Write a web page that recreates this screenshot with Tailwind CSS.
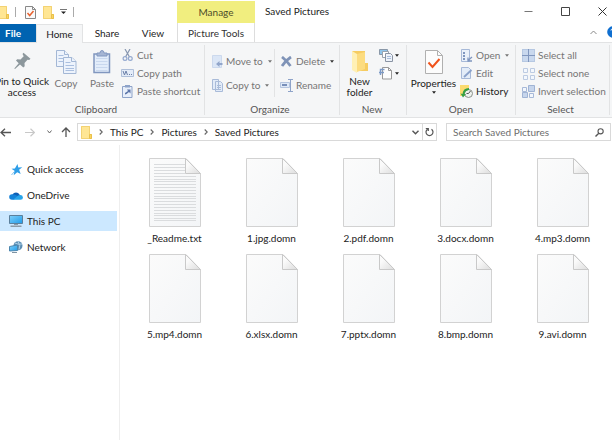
<!DOCTYPE html>
<html lang="en">
<head>
  <meta charset="UTF-8" />
  <title>Saved Pictures</title>
  <script src="https://cdn.jsdelivr.net/npm/@tailwindcss/browser@4"></script>
</head>
<body class="bg-white text-[#222] text-[10px] leading-3 font-[Lato,sans-serif] min-h-screen flex flex-col overflow-hidden">

  <!-- shared icons -->
  <svg class="absolute size-0">
    <linearGradient id="paper" x1="0" y1="0" x2="1" y2="1"><stop offset="0" stop-color="#fbfbfb" /><stop offset="1" stop-color="#f3f5f7" /></linearGradient>
    <linearGradient id="fold" x1="0" y1="0" x2="1" y2="1"><stop offset="0.3" stop-color="#fafafa" /><stop offset="1" stop-color="#dcdcdc" /></linearGradient>
    <linearGradient id="screen" x1="0" y1="0" x2="1" y2="1"><stop offset="0" stop-color="#7fd0fb" /><stop offset="1" stop-color="#1f9be8" /></linearGradient>
    <symbol id="folder" viewBox="0 0 11 13">
      <path d="M0 0h9v8h2v5H0z" fill="#fbdf83" /><path d="M.5.5h8v12H.5z" fill="#ffe694" stroke="#f3d273" /><path d="M8.500 8.500h2v4h-2z" fill="#fbd560" stroke="#e9c04c" />
    </symbol>
    <symbol id="caret" viewBox="0 0 5 3"><path d="M0 0h5L2.500 3z" fill="currentColor" /></symbol>
    <symbol id="chevron" viewBox="0 0 4 6"><path d="M.7.500 3.200 3 .7 5.500" fill="none" stroke="#666" stroke-width="1.100" /></symbol>
    <symbol id="file" viewBox="0 0 52 69">
      <path d="M.5.5H37L51.500 15.500V68.500H.5z" fill="url(#paper)" stroke="#d2d2d2" />
      <path d="M36.500.5 51.500 15.500h-15z" fill="url(#fold)" stroke="#c9c9c9" />
    </symbol>
    <symbol id="lines" viewBox="0 0 52 69">
      <path d="M5 6.500h31M5 9.500h31M5 12.500h31M5 15.500h31M5 18.500h42M5 21.500h42M5 23.500h42M5 26.500h42M5 29.500h42M5 32.500h42M5 35.500h42M5 38.500h42M5 40.500h42M5 43.500h42M5 46.500h42M5 49.500h42M5 52.500h42M5 55.500h42M5 57.500h42M5 60.500h42M5 62.500h42" stroke="#dadcde" fill="none" />
    </symbol>
  </svg>

  <header class="grid grid-cols-[177px_78px_1fr] h-[42px]">
    <div class="flex flex-col">
      <div class="flex items-center h-6 shrink-0">
        <svg class="w-[9px] h-[13px]" viewBox="2 0 9 13"><use href="#folder" width="11" height="13" /></svg>
        <span class="w-px h-2.5 bg-[#aaa] ml-1.5"></span>
        <button aria-label="Properties" class="ml-[9px]">
          <svg class="w-[11px] h-[13px]" viewBox="0 0 11 13"><path d="M.5.5h7l3 3v9H.5z" fill="#fafafa" stroke="#888" /><path d="M7.500.5v3h3" fill="none" stroke="#888" /><path d="m2.500 7 2.200 2.500L8.500 5" fill="none" stroke="#e8622f" stroke-width="1.500" /></svg>
        </button>
        <button aria-label="New folder" class="ml-[7px]"><svg class="w-[11px] h-[13px]"><use href="#folder" /></svg></button>
        <button aria-label="Customize toolbar" class="ml-1.5"><svg class="w-[7px] h-[6px]" viewBox="0 0 7 6"><path d="M0 .5h7" stroke="#777" /><path d="M1 2.500h5L3.500 5z" fill="#222" /></svg></button>
        <span class="w-px h-2.5 bg-[#aaa] ml-1.5"></span>
      </div>
      <nav class="flex h-[18px]">
        <button class="w-9 bg-[#0063b1] text-white font-bold pr-2.5">File</button>
        <button class="w-[47px] h-[19px] relative bg-[#f5f6f7] border-x border-t border-[#e2e3e4]">Home</button>
        <button class="w-12">Share</button>
        <button class="w-11">View</button>
      </nav>
    </div>
    <div class="flex flex-col pt-px">
      <button class="h-[22px] bg-[#f1ee7f] text-[#4d4d2a]">Manage</button>
      <button class="h-[19px] border-x border-[#ddd] text-[#333]">Picture Tools</button>
    </div>
    <div class="flex flex-col">
      <div class="flex h-[22px] shrink-0 items-center gap-7 pr-[5px]">
        <h1 class="pl-2.5 flex-1">Saved Pictures</h1>
        <button aria-label="Minimize"><svg class="size-[9px]" viewBox="0 0 9 9"><path d="M.5 4.500h8" stroke="#777" /></svg></button>
        <button aria-label="Maximize"><svg class="size-[9px]" viewBox="0 0 9 9"><path d="M.5.5h8v8h-8z" fill="none" stroke="#444" /></svg></button>
        <button aria-label="Close"><svg class="size-[9px]" viewBox="0 0 9 9"><path d="m.5.5 8 8m0-8-8 8" stroke="#333" /></svg></button>
      </div>
      <div class="flex justify-end items-center h-5">
        <button aria-label="Collapse ribbon"><svg class="w-[7px] h-[5px]" viewBox="0 0 7 5"><path d="M.5 4 3.500 1l3 3" fill="none" stroke="#888" /></svg></button>
        <button aria-label="Help" class="ml-2.5"><svg class="w-[5px] h-3" viewBox="0 0 5 12"><circle cx="6" cy="6" r="5.800" fill="#0f6fd0" /><path d="M4 4.500q0-1.500 1.500-1.500" stroke="#fff" fill="none" /></svg></button>
      </div>
    </div>
  </header>

  <section class="flex h-[76px] bg-[#f5f6f7] border-y border-[#e2e3e4] text-[#757575] whitespace-nowrap overflow-hidden">
    <!-- Clipboard -->
    <div class="w-[205px] shrink-0 flex flex-col border-r border-[#e2e3e4] my-0.5">
      <div class="flex flex-1">
        <button class="w-11 flex flex-col items-center pt-[7px] text-[#222]">
          <svg class="w-[17px] h-[18px] ml-px shrink-0" viewBox="0 0 17 18"><path d="m9.500.8 7 6-1.300 1.300-1.700-.3-3 3.200.2 3.200-1.400 1.200-3.300-3L1 17l-.7-.6L4.700 11.200 2 8.500l1.200-1.200 3.300.2 3.200-3.300L8.500 2z" fill="#8c979c" /></svg>
          <span class="mt-1.5 leading-[11px] text-center">Pin to Quick<br />access</span>
        </button>
        <button class="w-11 flex flex-col items-center pt-[5px]">
          <svg class="w-[21px] h-6 shrink-0" viewBox="0 0 21 24">
            <g fill="#edf3fc" stroke="#a3b7d5"><path d="M.5.5h8l4 4v12H.5z" /><path d="M8.500.5v4h4" /><path d="M7.500 7.500h8.500l4 4v12H7.500z" /><path d="M15.500 7.500v4h4.500" /></g>
            <path d="M2.500 5.500h5M2.500 8.500h5M2.500 11.500h5M9.500 12.500h5M9.500 15.500h8.500M9.500 18.500h8.500M9.500 20.500h8.500" stroke="#aabfdf" />
          </svg>
          <span class="mt-[3px]">Copy</span>
        </button>
        <button class="w-6 ml-0.5 flex flex-col items-center pt-[5px]">
          <svg class="w-[18px] h-6 shrink-0" viewBox="0 0 18 24"><path d="M1 4h15.500v18.500H1z" fill="#e3edfa" stroke="#8197bf" stroke-width="1.500" /><path d="M4 3h3q0-2.500 2-2.500T11 3h3v3H4z" fill="#a5b5d3" stroke="#8197bf" /><path d="M3 8.500h11.500M3 11.500h11.500M3 14.500h11.500M3 17.500h11.500M3 20.500h11.500" stroke="#c9d8ee" /></svg>
          <span class="mt-[3px]">Paste</span>
        </button>
        <div class="flex flex-col pt-px ml-[7px]">
          <button class="flex items-center h-[18px] gap-[3px]"><svg class="w-[13px] h-3" viewBox="0 0 13 12"><path d="M4 0 8.500 8M9 0 4.500 8" stroke="#8796b0" stroke-width="1.200" /><circle cx="4" cy="9.500" r="1.900" fill="none" stroke="#94a9cf" stroke-width="1.200" /><circle cx="9.300" cy="9.500" r="1.900" fill="none" stroke="#94a9cf" stroke-width="1.200" /></svg>Cut</button>
          <button class="flex items-center h-[18px] gap-[3px]"><svg class="w-[13px] h-2" viewBox="0 0 13 8"><path d="M.5.5h12v7H.5z" fill="#e4ecf8" stroke="#afbfd9" /><path d="m2 2 1.500 4L5 2l1.500 4M8 5.500h1m1 0h1" fill="none" stroke="#6b80a8" /></svg>Copy path</button>
          <button class="flex items-center h-[18px] gap-[3px]"><svg class="w-[13px] h-[13px]" viewBox="0 0 13 13"><path d="M1.500 1.500h9.500v11H1.500z" fill="#e8effa" stroke="#8ea3c9" /><path d="M4 0h5v2.500H4z" fill="#8ea3c9" /><path d="M4 9.500V8l3-2-1-1.500h3.500v4L8 7 5.500 9z" fill="#5c75a8" /></svg>Paste shortcut</button>
        </div>
      </div>
      <div class="text-center pr-3 h-3 text-[#555]">Clipboard</div>
    </div>

    <!-- Organize -->
    <div class="w-[135px] shrink-0 flex flex-col border-r border-[#e2e3e4] my-0.5">
      <div class="flex flex-1">
        <div class="w-[70px] h-12 mt-1 pl-[7px] border-r border-[#e2e3e4] flex flex-col">
          <button class="flex items-center h-6 gap-[3px]"><svg class="w-[11px] h-[13px]" viewBox="0 0 11 13"><path d="M.5.5h9v12h-9z" fill="#dbe6f6" stroke="#ccd9ed" /><path d="M10.500 8h-3V6L4 9l3.500 3v-2h3z" fill="#91a5ca" /></svg>Move to<svg class="w-1 h-[3px] ml-0.5"><use href="#caret" /></svg></button>
          <button class="flex items-center h-6 gap-[3px]"><svg class="w-[11px] h-[13px]" viewBox="0 0 11 13"><path d="M.5.5h6v10h-6zM3.500 2.500h5l2 2v8h-7z" fill="#e2ebf8" stroke="#a9bbd9" /><path d="M5 6.500h4M5 8.500h4M5 10.500h4" stroke="#a9bbd9" /></svg>Copy to<svg class="w-1 h-[3px] ml-0.5"><use href="#caret" /></svg></button>
        </div>
        <div class="h-12 mt-1 pl-[5px] flex flex-col">
          <button class="flex items-center h-6 gap-[3px]"><svg class="w-[13px] h-[11px]" viewBox="0 0 13 11"><path d="M2 1q4 3 8.500 9M11 1Q6 4 2 10" fill="none" stroke="#7f93b7" stroke-width="2.800" /></svg>Delete<svg class="w-1 h-[3px] text-[#333] ml-0.5"><use href="#caret" /></svg></button>
          <button class="flex items-center h-6 gap-[3px]"><svg class="w-[13px] h-[13px]" viewBox="0 0 13 13"><path d="M.5 3.500h9v5h-9z" fill="#dfe9f7" stroke="#b5c5df" /><path d="M2 6h5" stroke="#7990ba" stroke-width="2" /><path d="M8 .5h5M8 12.500h5M10.500.5v12" stroke="#8ea3c9" /></svg>Rename</button>
        </div>
      </div>
      <div class="text-center pr-1 h-3 text-[#555]">Organize</div>
    </div>

    <!-- New -->
    <div class="w-[67px] shrink-0 flex flex-col border-r border-[#e2e3e4] my-0.5">
      <div class="flex flex-1">
        <button class="w-[39px] flex flex-col items-center pt-[6px] text-[#222]">
          <svg class="w-4 h-[22px] shrink-0" viewBox="0 0 16 22"><path d="M0 0h13v12h3v8H6z" fill="#f6cc62" /><path d="M0 0l5 3v19l-5-3z" fill="#fff0b5" /><path d="M5 3 13 1v17l-8 3z" fill="#fcdc80" /></svg>
          <span class="mt-[3px] leading-[11px] text-center">New<br />folder</span>
        </button>
        <div class="flex flex-col gap-1 pt-[3px]">
          <button aria-label="New item" class="flex items-center gap-0.5 text-[#222]"><svg class="w-[14px] h-[14px]" viewBox="0 0 14 14"><path d="M.5 1.500h8v5h-8z" fill="#8fc4ea" stroke="#8a98a8" /><path d="M3.500 3.500h6v6h-6z" fill="#fff" stroke="#98a2ae" /><path d="M6.500 5.500h5l2 2v6h-7z" fill="#eef3fa" stroke="#8a94a4" /><path d="M8 8.500h4M8 10.500h4" stroke="#a8bddc" /></svg><svg class="w-1 h-[3px]"><use href="#caret" /></svg></button>
          <button aria-label="Easy access" class="flex items-center gap-0.5 text-[#222]"><svg class="w-[14px] h-[14px]" viewBox="0 0 14 14"><path d="M3.500 1.500h6l3 3v8.500h-9z" fill="#fdfdfd" stroke="#999" /><path d="M9.500 1.500v3h3" fill="none" stroke="#999" /><path d="M0 6.500h5M1.500 9V3.500h4" fill="none" stroke="#7c9ac7" stroke-width="1.400" /></svg><svg class="w-1 h-[3px]"><use href="#caret" /></svg></button>
        </div>
      </div>
      <div class="text-center pr-0.5 h-3 text-[#555]">New</div>
    </div>

    <!-- Open -->
    <div class="w-[109px] shrink-0 flex flex-col border-r border-[#e2e3e4] my-0.5">
      <div class="flex flex-1">
        <button class="w-[53px] flex flex-col items-center pt-[5px] text-[#222]">
          <svg class="w-[18px] h-6 shrink-0" viewBox="0 0 18 24"><path d="M.5.5h12l5 5v18H.5z" fill="#fcfcfc" stroke="#b0b0b0" /><path d="M12.500.5v5h5" fill="none" stroke="#b0b0b0" /><path d="m3.500 12.500 4 4.500L14.500 9" fill="none" stroke="#f0531c" stroke-width="2" /></svg>
          <span class="mt-[3px]">Properties</span>
          <svg class="w-1 h-[3px] mt-0.5 shrink-0"><use href="#caret" /></svg>
        </button>
        <div class="flex flex-col pt-px">
          <button class="flex items-center h-[18px] gap-[3px]"><svg class="w-[13px] h-[13px]" viewBox="0 0 13 13"><path d="M1.500.5h8v12h-8z" fill="#e9f0fa" stroke="#a7b9d8" /><path d="M3 3h2v2H3zM3 6h2v2H3zM3 9h2v2H3z" fill="#7f96bf" /><path d="m12 8-4 3.500M8 8.500v3.500h4" fill="none" stroke="#7f96bf" stroke-width="1.300" /></svg>Open<svg class="w-1 h-[3px] ml-0.5"><use href="#caret" /></svg></button>
          <button class="flex items-center h-[18px] gap-[3px]"><svg class="w-[13px] h-3" viewBox="0 0 13 12"><path d="M1.500.5h7l2 2v9h-9z" fill="#e3ecf8" stroke="#a7b9d8" /><path d="m4 10 7.500-7" stroke="#8ba2cb" stroke-width="1.800" /></svg>Edit</button>
          <button class="flex items-center h-[18px] gap-[3px] text-[#222]"><svg class="w-[13px] h-[13px]" viewBox="0 0 13 13"><path d="M0 0h9v11H0z" fill="#fbdb70" /><circle cx="8.500" cy="8.500" r="4" fill="#eef2ee" stroke="#8a918a" /><path d="M8.500 8.500l2-2.500M8.500 8.500h-2" stroke="#555" /><path d="M9 3Q3 3 2.500 9L.5 8.500 3 12.500l3-3.500H4.500Q5 5.500 9 5z" fill="#35a045" /></svg>History</button>
        </div>
      </div>
      <div class="text-center h-3 text-[#555]">Open</div>
    </div>

    <!-- Select -->
    <div class="w-[94px] shrink-0 flex flex-col border-r border-[#e2e3e4] my-0.5">
      <div class="flex flex-col flex-1 pt-px pl-1.5">
        <button class="flex items-center h-[18px] gap-[3px]"><svg class="size-[13px]" viewBox="0 0 13 13"><path d="M0 0h13v13H0z" fill="#b6c8e2" /><path d="M1 1h5v5H1zM7 1h5v5H7zM1 7h5v5H1zM7 7h5v5H7z" fill="#c9d8ee" /><path d="M6.500 0v13M0 6.500h13" stroke="#8197bf" /></svg>Select all</button>
        <button class="flex items-center h-[18px] gap-[3px]"><svg class="size-[13px]" viewBox="0 0 13 13"><path d="M1.500 1.500h4v4h-4zM8.500 1.500h4v4h-4zM1.500 8.500h4v4h-4zM8.500 8.500h4v4h-4z" fill="#f3f7fd" stroke="#bccbe2" /></svg>Select none</button>
        <button class="flex items-center h-[18px] gap-[3px]"><svg class="size-[13px]" viewBox="0 0 13 13"><path d="M.5 2.500h4v4h-4zM7.500 8.500h4v4h-4z" fill="#f3f7fd" stroke="#a7b9d8" /><path d="M6.500.5h6v6h-6zM.5 7.500h5v5h-5z" fill="#c6d5ec" stroke="#9fb3d4" /></svg>Invert selection</button>
      </div>
      <div class="text-center pr-1 h-3 text-[#555]">Select</div>
    </div>
  </section>

  <div class="flex items-center h-[27px] pt-px">
    <div class="w-[77px] shrink-0 flex items-center">
      <button aria-label="Back"><svg class="w-[11px] h-[9px]" viewBox="0 0 11 9"><path d="M5 .7 1 4.500l4 3.800M1 4.500h10" fill="none" stroke="#555" stroke-width="1.300" /></svg></button>
      <button aria-label="Forward" class="ml-[14px]"><svg class="w-[10px] h-[9px]" viewBox="0 0 10 9"><path d="m5.500.7 4 3.800-4 3.800M9.500 4.500H0" fill="none" stroke="#c8c8c8" stroke-width="1.200" /></svg></button>
      <button aria-label="Recent locations" class="ml-3"><svg class="w-[5px] h-[4px]" viewBox="0 0 5 4"><path d="m.5.5 2 2.500 2-2.500" fill="none" stroke="#666" /></svg></button>
      <button aria-label="Up" class="ml-[9px]"><svg class="w-[10px] h-[10px]" viewBox="0 0 10 10"><path d="M1 5l4-4 4 4M5 1v9" fill="none" stroke="#555" stroke-width="1.300" /></svg></button>
    </div>
    <div class="flex-1 flex items-center h-[18px] border border-[#d9d9d9] pl-[3px]">
      <svg class="w-[11px] h-[13px]"><use href="#folder" /></svg>
      <svg class="w-1 h-1.5 mx-[7px]"><use href="#chevron" /></svg>
      <a href="#">This PC</a>
      <svg class="w-1 h-1.5 mx-[7px]"><use href="#chevron" /></svg>
      <a href="#">Pictures</a>
      <svg class="w-1 h-1.5 mx-[7px]"><use href="#chevron" /></svg>
      <a href="#" class="flex-1">Saved Pictures</a>
      <button aria-label="Previous locations" class="mr-[3px]"><svg class="w-[7px] h-[5px]" viewBox="0 0 7 5"><path d="m.5.7 3 3 3-3" fill="none" stroke="#555" stroke-width="1.400" /></svg></button>
      <button aria-label="Refresh" class="w-[14px] h-full border-l border-[#d9d9d9] flex items-center justify-center"><svg class="w-[9px] h-[10px]" viewBox="0 0 9 10"><path d="M6.500 2.200A3.500 3.500 0 1 1 2.500 2.200M.8 1.500h2.500V4" fill="none" stroke="#555" stroke-width="1.200" /></svg></button>
    </div>
    <label class="w-[165px] ml-[9px] mr-px flex items-center h-[18px] border border-[#d9d9d9] px-1.5">
      <input type="text" placeholder="Search Saved Pictures" aria-label="Search Saved Pictures" class="flex-1 min-w-0 outline-none placeholder:text-[#6d6d6d]" />
      <svg class="w-[9px] h-[9px]" viewBox="0 0 9 9"><circle cx="5.600" cy="3.300" r="2.600" fill="none" stroke="#555" stroke-width="1.100" /><path d="M3.800 5.200.5 8.500" stroke="#555" stroke-width="1.400" /></svg>
    </label>
  </div>

  <div class="flex flex-1">
    <nav class="w-[120px] shrink-0 border-r border-[#eee] pt-[14px] pr-0.5 flex flex-col gap-1.5">
      <a href="#" class="flex items-center h-5 gap-1 pl-[9px]"><svg class="w-[14px] h-[13px]" viewBox="0 0 14 13"><path d="m8.500 1 .8 3.500 4-.3-3.200 2.500 1.600 4.300-3.500-1.800-3.500 3 .8-4.500-3-2 3.400-.2z" fill="#2e9ee8" /><path d="M2.500 12 5 9" stroke="#83c4ee" /></svg>Quick access</a>
      <a href="#" class="flex items-center h-5 gap-1 pl-[9px]"><svg class="w-[14px] h-[9px]" viewBox="0 0 14 9"><path d="M3.500 3.500A4 4 0 0 1 10.500 3.500L12 6 5 8z" fill="#0f5fb4" /><path d="M3 3.200Q6 3 8.500 5L5 8.800H3A2.800 2.800 0 0 1 3 3.200z" fill="#1482d8" /><path d="M4 8.800 9 4.500q4.500-1.500 5 2 0 2.300-2.500 2.300z" fill="#28a5ea" /></svg>OneDrive</a>
      <a href="#" class="flex items-center h-5 gap-1 pl-[9px] bg-[#cce8ff]"><svg class="w-[14px] h-[12px]" viewBox="0 0 14 12"><path d="M.5.5h13v8H.5z" fill="url(#screen)" stroke="#5b7f9b" /><path d="M5 9h4v1H5zM1.500 10.500h11V12h-11z" fill="#8b9aa6" /></svg>This PC</a>
      <a href="#" class="flex items-center h-5 gap-1 pl-[9px]"><svg class="w-[14px] h-[12px]" viewBox="0 0 14 12"><circle cx="9" cy="4.800" r="4.500" fill="#5d8fb4" /><path d="M6 2q3 2 7 1M9 .5q3 4 1 8" stroke="#b3d3e8" fill="none" /><path d="M.5 5.500 8.500 4v5.500L.5 10z" fill="url(#screen)" stroke="#4c86ae" /><path d="M3 11.500h5" stroke="#7e93a3" /></svg>Network</a>
    </nav>
    <main id="files" class="flex-1 pl-1.5 pt-[13px] grid grid-cols-[repeat(auto-fill,97px)] auto-rows-[96px] content-start"></main>
  </div>

<script>
  const files = [
    "_Readme.txt", "1.jpg.domn", "2.pdf.domn", "3.docx.domn", "4.mp3.domn",
    "5.mp4.domn", "6.xlsx.domn", "7.pptx.domn", "8.bmp.domn", "9.avi.domn"
  ];

  document.getElementById("files").innerHTML = files.map(name => `
    <button class="flex flex-col items-center">
      <svg class="w-[52px] h-[69px] mb-[5px] shrink-0" viewBox="0 0 52 69">
        <use href="#file" />${name.endsWith(".txt") ? '<use href="#lines" />' : ""}
      </svg>
      ${name}
    </button>
  `).join("");
</script>

</body>
</html>
